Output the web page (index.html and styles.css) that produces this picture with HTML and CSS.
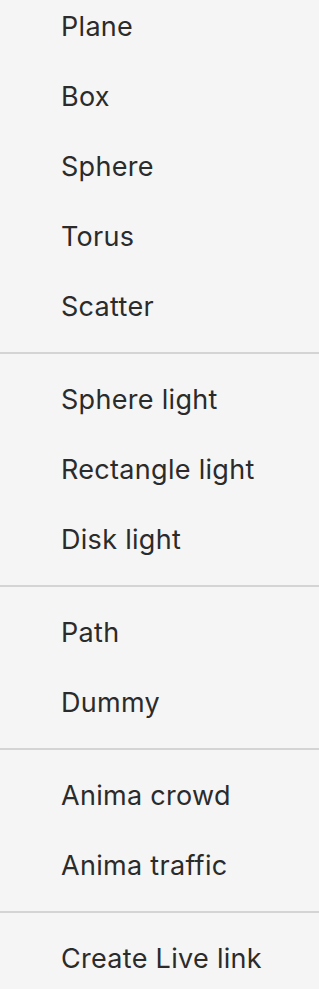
FILE: index.html
```html
<!DOCTYPE html>
<html lang="en">
<head>
    <meta charset="UTF-8">
    <meta name="viewport" content="width=device-width, initial-scale=1.0">
    <title>Create menu</title>
    <link rel="stylesheet" href="styles.css">
</head>
<body>
    <div class="menu">
        <div class="menu-item">Plane</div>
        <div class="menu-item">Box</div>
        <div class="menu-item">Sphere</div>
        <div class="menu-item">Torus</div>
        <div class="menu-item">Scatter</div>
        <div class="separator"></div>
        <div class="menu-item">Sphere light</div>
        <div class="menu-item">Rectangle light</div>
        <div class="menu-item">Disk light</div>
        <div class="separator"></div>
        <div class="menu-item">Path</div>
        <div class="menu-item">Dummy</div>
        <div class="separator"></div>
        <div class="menu-item">Anima crowd</div>
        <div class="menu-item">Anima traffic</div>
        <div class="separator"></div>
        <div class="menu-item">Create Live link</div>
    </div>
</body>
</html>
```

FILE: styles.css
```css
html, body {
    margin: 0;
    padding: 0;
    background-color: #f5f5f5;
    overflow: hidden;
}
body {
    font-family: Inter, "Noto Sans", sans-serif;
    color: #2b2b2b;
}
.menu {
    margin-top: -8px;
}
.menu-item {
    height: 70px;
    line-height: 70px;
    padding-left: 61px;
    font-size: 27px;
    letter-spacing: 0.3px;
    white-space: nowrap;
}
.separator {
    height: 2px;
    background-color: #d4d4d4;
    margin: 10px 0 11px;
}
```
